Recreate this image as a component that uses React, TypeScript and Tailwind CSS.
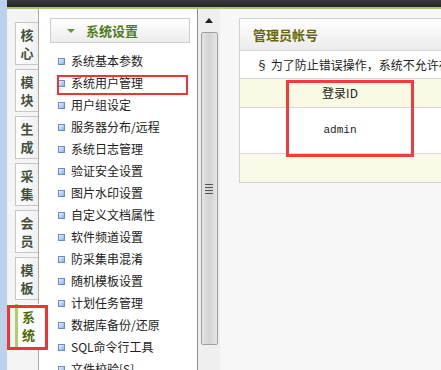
import React from 'react';

const cjk = { fontFamily: '"Noto Sans CJK SC", "Liberation Sans", sans-serif' };

const tabs = [
    ['核', '心'],
    ['模', '块'],
    ['生', '成'],
    ['采', '集'],
    ['会', '员'],
    ['模', '板'],
    ['系', '统'],
];

const menuItems = [
    '系统基本参数',
    '系统用户管理',
    '用户组设定',
    '服务器分布/远程',
    '系统日志管理',
    '验证安全设置',
    '图片水印设置',
    '自定义文档属性',
    '软件频道设置',
    '防采集串混淆',
    '随机模板设置',
    '计划任务管理',
    '数据库备份/还原',
    'SQL命令行工具',
    '文件校验[S]',
];

const App: React.FC = () => {
    return (
        <div className="w-[441px] h-[370px] overflow-hidden flex bg-[#f7f7f7] text-[12px] text-[#222]" style={cjk}>
            <div className="w-[7px] shrink-0 bg-[#bcd2ec]"></div>
            <div className="flex-1 flex flex-col min-w-0">
                <div className="h-[7px] shrink-0 bg-gradient-to-b from-[#3a3a3a] to-[#262626]"></div>
                <div className="h-[2px] shrink-0 bg-[#a8c46e]"></div>
                <div className="flex flex-1 min-h-0">
                    {/* tab column */}
                    <div className="w-[32px] shrink-0 bg-[#f4f4f4] border-r border-[#a9ad9f] pl-[8px] pt-[13px] flex flex-col gap-[4px]">
                        {tabs.map((t, i) => {
                            const active = i === tabs.length - 1;
                            return (
                                <div
                                    key={i}
                                    className={
                                        active
                                            ? 'relative h-[43px] -mr-[1px] bg-white border-l-[3px] border-[#a9d06a] flex flex-col items-center justify-center gap-[3px] font-bold text-[13px] leading-[15px] text-[#4c6a06]'
                                            : 'h-[43px] bg-gradient-to-r from-white to-[#efefef] border border-r-0 border-[#c6c6c6] flex flex-col items-center justify-center gap-[3px] font-bold text-[13px] leading-[15px] text-[#44503c]'
                                    }
                                >
                                    <span>{t[0]}</span>
                                    <span>{t[1]}</span>
                                    {active && (
                                        <div className="absolute left-[-11px] top-[1px] w-[41px] h-[45px] border-[3px] border-[#ee3535]"></div>
                                    )}
                                </div>
                            );
                        })}
                    </div>

                    {/* menu */}
                    <div className="w-[158px] shrink-0 bg-white">
                        <div className="ml-[11px] mt-[9px] w-[140px] h-[25px] border border-[#cdcdcd] bg-gradient-to-b from-white to-[#ececec] flex items-center">
                            <span className="ml-[16px] w-0 h-0 border-l-[4px] border-r-[4px] border-t-[4px] border-l-transparent border-r-transparent border-t-[#5f9a3c]"></span>
                            <span className="ml-[11px] font-bold text-[13px] text-[#4f7d1e]">系统设置</span>
                        </div>
                        <div className="mt-[7px] flex flex-col">
                            {menuItems.map((m, i) => (
                                <div key={i} className="relative h-[22px] pl-[19px] flex items-center gap-[6px] whitespace-nowrap">
                                    <span className="w-[7px] h-[7px] shrink-0 border border-[#6d8cbf] bg-gradient-to-br from-[#eef4ff] to-[#8aaee0]"></span>
                                    <span>{m}</span>
                                    {i === 1 && (
                                        <div className="absolute left-[18px] top-[3px] w-[131px] h-[20px] border-2 border-[#ee3535]"></div>
                                    )}
                                </div>
                            ))}
                        </div>
                    </div>

                    {/* scrollbar */}
                    <div className="w-[23px] shrink-0 border-l border-[#8f8f8f] bg-[#efefef] flex flex-col items-center">
                        <div className="mt-[9px] w-0 h-0 border-l-[4px] border-r-[4px] border-b-[5px] border-l-transparent border-r-transparent border-b-[#222]"></div>
                        <div className="mt-[9px] w-[17px] h-[313px] border border-[#a0a0a0] rounded-[2px] bg-gradient-to-r from-[#e4e4e4] via-[#d2d2d2] to-[#e6e6e6] flex items-center justify-center">
                            <div className="flex flex-col gap-[2px]">
                                <div className="w-[8px] h-[1px] bg-[#555]"></div>
                                <div className="w-[8px] h-[1px] bg-[#555]"></div>
                                <div className="w-[8px] h-[1px] bg-[#555]"></div>
                                <div className="w-[8px] h-[1px] bg-[#555]"></div>
                            </div>
                        </div>
                    </div>

                    {/* content */}
                    <div className="flex-1 min-w-0 pl-[19px] pt-[9px]">
                        <div className="relative w-[260px] border border-[#d2d2d2] bg-white">
                            <div className="h-[32px] bg-gradient-to-b from-white to-[#ebebeb] border-b border-[#d8d8d8] flex items-center pl-[13px] font-bold text-[13px] text-[#666608]">
                                管理员帐号
                            </div>
                            <div className="h-[28px] border-b border-[#d8d8d8] flex items-center pl-[16px] whitespace-nowrap">
                                § 为了防止错误操作，系统不允许在这里删除创始人帐号
                            </div>
                            <div className="h-[29px] bg-[#fafae4] border-b border-[#d8d8d8] flex items-center">
                                <div className="w-[200px] text-center">登录ID</div>
                            </div>
                            <div className="h-[46px] border-b border-[#d8d8d8] flex items-center">
                                <div className="w-[200px] text-center text-[11px]" style={{ fontFamily: '"Liberation Mono", monospace' }}>admin</div>
                            </div>
                            <div className="h-[28px] bg-[#fafae8]"></div>
                            <div className="absolute left-[46px] top-[61px] w-[128px] h-[77px] border-[3px] border-[#f03c3c]"></div>
                        </div>
                    </div>
                </div>
            </div>
        </div>
    );
};

export default App;
